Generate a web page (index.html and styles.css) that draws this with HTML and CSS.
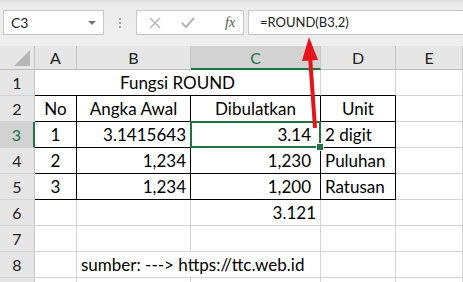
FILE: index.html
```html
<!DOCTYPE html>
<html lang="id">
<head>
  <meta charset="UTF-8">
  <title>Fungsi ROUND</title>
  <link rel="stylesheet" href="styles.css">
</head>
<body>
  <div class="sheet">
    <div class="toolbar">
      <div class="name-box">
        <span>C3</span>
        <span class="drop"></span>
      </div>
      <div class="grip"><i></i><i></i><i></i></div>
      <div class="fx-box">
        <svg width="12" height="12" viewBox="0 0 12 12"><path d="M1 1 L11 11 M11 1 L1 11" stroke="#b4b4b4" stroke-width="1.4" fill="none"/></svg>
        <svg width="14" height="12" viewBox="0 0 14 12"><path d="M1 6 L5 10 L13 1" stroke="#b4b4b4" stroke-width="2" fill="none"/></svg>
        <span class="fx">fx</span>
      </div>
      <div class="formula">=ROUND(B3,2)</div>
    </div>

    <div class="grid">
      <!-- column headers -->
      <div class="corner"><span class="tri"></span></div>
      <div class="colh">A</div>
      <div class="colh">B</div>
      <div class="colh active">C</div>
      <div class="colh">D</div>
      <div class="colh">E</div>

      <!-- row 1 -->
      <div class="rowh">1</div>
      <div class="cell merged bb center">Fungsi ROUND</div>
      <div class="cell bb"></div>
      <div class="cell"></div>

      <!-- row 2 -->
      <div class="rowh">2</div>
      <div class="cell box center">No</div>
      <div class="cell box center">Angka Awal</div>
      <div class="cell box center">Dibulatkan</div>
      <div class="cell box center">Unit</div>
      <div class="cell"></div>

      <!-- row 3 -->
      <div class="rowh active">3</div>
      <div class="cell box center">1</div>
      <div class="cell box right">3.1415643</div>
      <div class="cell box right pad sel">3.14</div>
      <div class="cell box">2 digit</div>
      <div class="cell"></div>

      <!-- row 4 -->
      <div class="rowh">4</div>
      <div class="cell box center">2</div>
      <div class="cell box right">1,234</div>
      <div class="cell box right pad">1,230</div>
      <div class="cell box">Puluhan</div>
      <div class="cell"></div>

      <!-- row 5 -->
      <div class="rowh">5</div>
      <div class="cell box center">3</div>
      <div class="cell box right">1,234</div>
      <div class="cell box right pad">1,200</div>
      <div class="cell box">Ratusan</div>
      <div class="cell"></div>

      <!-- row 6 -->
      <div class="rowh">6</div>
      <div class="cell"></div>
      <div class="cell"></div>
      <div class="cell right">3.121</div>
      <div class="cell"></div>
      <div class="cell"></div>

      <!-- row 7 -->
      <div class="rowh">7</div>
      <div class="cell"></div>
      <div class="cell"></div>
      <div class="cell"></div>
      <div class="cell"></div>
      <div class="cell"></div>

      <!-- row 8 -->
      <div class="rowh">8</div>
      <div class="cell"></div>
      <div class="cell span2">sumber: ---&gt; https://ttc.web.id</div>
      <div class="cell"></div>
      <div class="cell"></div>

      <!-- row 9, only its top edge is in view -->
      <div class="rowh"></div>
      <div class="cell"></div>
      <div class="cell"></div>
      <div class="cell"></div>
      <div class="cell"></div>
      <div class="cell"></div>
    </div>

    <!-- red arrow pointing at the formula -->
    <svg class="arrow" width="463" height="282" viewBox="0 0 463 282">
      <line x1="315" y1="128" x2="310" y2="56" stroke="#e8141b" stroke-width="4"/>
      <polygon points="309,37 302,61 318,60" fill="#e8141b"/>
    </svg>
  </div>
</body>
</html>
```

FILE: styles.css
```css
* {
  margin: 0;
  padding: 0;
  box-sizing: border-box;
}
body {
  font-family: Lato, "Liberation Sans", sans-serif;
  background: #fff;
  color: #000;
  width: 463px;
  height: 282px;
  overflow: hidden;
}
.sheet {
  position: relative;
  width: 463px;
  height: 282px;
  overflow: hidden;
}

/* formula bar */
.toolbar {
  height: 46px;
  display: flex;
  align-items: flex-start;
  padding: 10px 0 0 3px;
  background: linear-gradient(#dcdcdc, #ececec 4px, #efefef);
}
.name-box {
  width: 101px;
  height: 25px;
  background: #fff;
  border: 1px solid #c6c6c6;
  display: flex;
  align-items: center;
  justify-content: space-between;
  padding: 0 7px 0 7px;
  font-size: 14px;
  color: #222;
}
.drop {
  width: 0;
  height: 0;
  border-left: 4px solid transparent;
  border-right: 4px solid transparent;
  border-top: 4px solid #777;
}
.grip {
  width: 32px;
  height: 25px;
  display: flex;
  flex-direction: column;
  align-items: center;
  justify-content: center;
  gap: 2px;
}
.grip i {
  width: 2px;
  height: 2px;
  background: #a8a8a8;
}
.fx-box {
  width: 108px;
  height: 25px;
  background: #fff;
  border: 1px solid #c6c6c6;
  display: flex;
  align-items: center;
  padding-left: 12px;
  gap: 20px;
}
.fx {
  font-family: "Liberation Serif", serif;
  font-style: italic;
  font-size: 14px;
  color: #555;
  margin-left: 10px;
}
.formula {
  flex: 1;
  height: 25px;
  margin-left: 4px;
  background: #fff;
  border: 1px solid #c6c6c6;
  border-right: none;
  padding-left: 11px;
  font-size: 13px;
  line-height: 23px;
  color: #222;
}

/* sheet grid */
.grid {
  display: grid;
  grid-template-columns: 35px 42px 114px 130px 75px 1fr;
  grid-template-rows: 24px;
  grid-auto-rows: 26px;
  font-size: 17px;
}
.corner, .colh, .rowh {
  background: #e6e6e6;
  border-right: 1px solid #c8c8c8;
  border-bottom: 1px solid #bdbdbd;
  color: #222;
}
.corner {
  position: relative;
}
.tri {
  position: absolute;
  right: 4px;
  bottom: 3px;
  width: 0;
  height: 0;
  border-left: 16px solid transparent;
  border-bottom: 16px solid #b6b6b6;
}
.colh {
  display: flex;
  align-items: center;
  justify-content: center;
  font-size: 16px;
}
.colh.active {
  background: #d2d2d2;
  color: #217346;
  border-bottom: 2px solid #217346;
}
.rowh {
  display: flex;
  align-items: center;
  justify-content: center;
  font-size: 16px;
  border-bottom: 1px solid #d4d4d4;
}
.rowh.active {
  background: #d2d2d2;
  color: #217346;
  border-right: 2px solid #217346;
}
.cell {
  border-right: 1px solid #d4d4d4;
  border-bottom: 1px solid #d4d4d4;
  display: flex;
  align-items: flex-end;
  padding: 0 4px 2px 4px;
  white-space: nowrap;
}
.merged {
  grid-column: span 3;
}
.span2 {
  grid-column: span 2;
}
.bb {
  border-bottom-color: #000;
}
.box {
  border-right-color: #000;
  border-bottom-color: #000;
}
.center { justify-content: center; }
.right { justify-content: flex-end; }
.pad { padding-right: 9px; }

/* selected cell */
.sel {
  position: relative;
}
.sel::after {
  content: "";
  position: absolute;
  left: -1px;
  top: -1px;
  right: -1px;
  bottom: -1px;
  border: 2px solid #217346;
}
.sel::before {
  content: "";
  position: absolute;
  right: -4px;
  bottom: -4px;
  width: 6px;
  height: 6px;
  background: #217346;
  border: 1px solid #fff;
  z-index: 1;
}

.arrow {
  position: absolute;
  left: 0;
  top: 0;
  pointer-events: none;
}
```
